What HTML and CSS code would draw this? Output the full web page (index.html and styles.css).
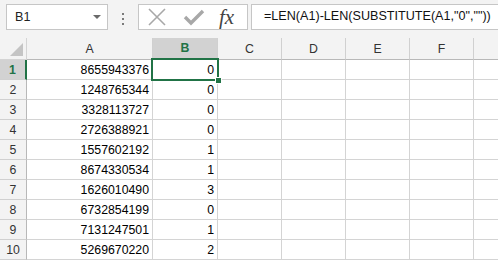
FILE: index.html
```html
<!DOCTYPE html>
<html>
<head>
    <title>Sheet</title>
    <meta charset="utf-8" />
    <link rel="stylesheet" href="styles.css">
</head>
<body>
    <div class="formula-bar">
        <div class="name-box">
            <span>B1</span>
            <span class="drop-arrow"></span>
        </div>
        <div class="grip">
            <span></span><span></span><span></span>
        </div>
        <div class="icon-box">
            <svg class="icon" width="20" height="18" viewBox="0 0 20 18">
                <path d="M2 1 L18 17 M18 1 L2 17" stroke="#a8a8a8" stroke-width="1.6" fill="none" />
            </svg>
            <svg class="icon" width="22" height="18" viewBox="0 0 22 18">
                <path d="M2 9 L8 15 L20 3" stroke="#a8a8a8" stroke-width="3.4" fill="none" />
            </svg>
            <span class="fx">fx</span>
        </div>
        <div class="formula-input">=LEN(A1)-LEN(SUBSTITUTE(A1,"0",""))</div>
    </div>

    <div class="grid">
        <div class="corner"><span class="corner-tri"></span></div>
        <div class="col-head">A</div>
        <div class="col-head selected">B</div>
        <div class="col-head">C</div>
        <div class="col-head">D</div>
        <div class="col-head">E</div>
        <div class="col-head">F</div>
        <div class="col-head last"></div>
    </div>

    <script>
        var data = [
            ["8655943376", 0], ["1248765344", 0], ["3328113727", 0], ["2726388921", 0],
            ["1557602192", 1], ["8674330534", 1], ["1626010490", 3], ["6732854199", 0],
            ["7131247501", 1], ["5269670220", 2]
        ];
        var grid = document.querySelector(".grid");
        data.forEach(function (row, i) {
            var html = '<div class="row-head' + (i === 0 ? ' selected' : '') + '">' + (i + 1) + '</div>';
            html += '<div class="cell num">' + row[0] + '</div>';
            html += '<div class="cell num' + (i === 0 ? ' active' : '') + '">' + row[1] +
                (i === 0 ? '<span class="sel-frame"></span><span class="fill-handle"></span>' : '') + '</div>';
            html += '<div class="cell"></div><div class="cell"></div><div class="cell"></div><div class="cell"></div><div class="cell last"></div>';
            grid.insertAdjacentHTML("beforeend", html);
        });
    </script>
</body>
</html>
```

FILE: styles.css
```css
html, body {
    margin: 0;
    height: 100%;
    background-color: #ffffff;
    font-family: "Liberation Sans", Arial, sans-serif;
    overflow: hidden;
}

.formula-bar {
    display: flex;
    align-items: flex-start;
    height: 38px;
    box-sizing: border-box;
    padding: 4px 0 0 6px;
    background-color: #f3f3f3;
}

.name-box {
    display: flex;
    align-items: center;
    justify-content: space-between;
    width: 102px;
    height: 26px;
    box-sizing: border-box;
    padding: 0 6px 0 8px;
    border: 1px solid #c6c6c6;
    background-color: #ffffff;
    font-size: 12.6px;
    color: #222;
}

.drop-arrow {
    width: 0;
    height: 0;
    border-left: 4px solid transparent;
    border-right: 4px solid transparent;
    border-top: 4px solid #6a6a6a;
}

.grip {
    display: flex;
    flex-direction: column;
    gap: 3px;
    width: 30px;
    align-items: center;
    padding-top: 9px;
}

.grip span {
    width: 2px;
    height: 2px;
    background-color: #7a7a7a;
}

.icon-box {
    display: flex;
    align-items: center;
    width: 110px;
    height: 26px;
    box-sizing: border-box;
    padding-left: 8px;
    border: 1px solid #c6c6c6;
    background-color: #ffffff;
}

.icon {
    margin-right: 16px;
}

.fx {
    margin-left: -2px;
    font-family: "Liberation Serif", "Times New Roman", serif;
    font-style: italic;
    font-size: 21px;
    line-height: 1;
    color: #444;
}

.formula-input {
    flex: 1;
    height: 26px;
    box-sizing: border-box;
    margin-left: 3px;
    padding: 4px 0 0 12px;
    border: 1px solid #c6c6c6;
    border-right: none;
    background-color: #ffffff;
    font-size: 12.6px;
    color: #111;
    white-space: nowrap;
}

.grid {
    display: grid;
    grid-template-columns: 27px 126px 65px 64px 64px 64px 64px 1fr;
    grid-template-rows: 22px;
    grid-auto-rows: 20px;
    font-size: 12.3px;
}

.grid > div {
    box-sizing: border-box;
    border-right: 1px solid #d4d4d4;
    border-bottom: 1px solid #d4d4d4;
}

.grid > .last {
    border-right: none;
}

.corner {
    position: relative;
    background-color: #f3f3f3;
}

.corner-tri {
    position: absolute;
    right: 3px;
    bottom: 3px;
    width: 0;
    height: 0;
    border-left: 13px solid transparent;
    border-bottom: 13px solid #c4c4c4;
}

.col-head {
    display: flex;
    align-items: center;
    justify-content: center;
    background-color: #f3f3f3;
    color: #333;
    border-right-color: #d0d0d0 !important;
    border-bottom-color: #b8b8b8 !important;
}

.col-head.selected {
    background-color: #d2d2d2;
    color: #217346;
    font-weight: bold;
    border-bottom: 2px solid #217346 !important;
}

.row-head {
    display: flex;
    align-items: center;
    justify-content: center;
    background-color: #f3f3f3;
    color: #333;
    border-right-color: #b8b8b8 !important;
    border-bottom-color: #d0d0d0 !important;
}

.row-head.selected {
    background-color: #d2d2d2;
    color: #217346;
    font-weight: bold;
    border-right: 2px solid #217346 !important;
}

.cell {
    color: #000;
}

.num {
    text-align: right;
    padding: 3px 3px 0 0;
}

.active {
    position: relative;
}

.sel-frame {
    position: absolute;
    left: -2px;
    top: -2px;
    right: -2px;
    bottom: -2px;
    border: 2px solid #217346;
}

.fill-handle {
    position: absolute;
    right: -5px;
    bottom: -5px;
    width: 5px;
    height: 5px;
    background-color: #217346;
    border: 1px solid #ffffff;
}
```
